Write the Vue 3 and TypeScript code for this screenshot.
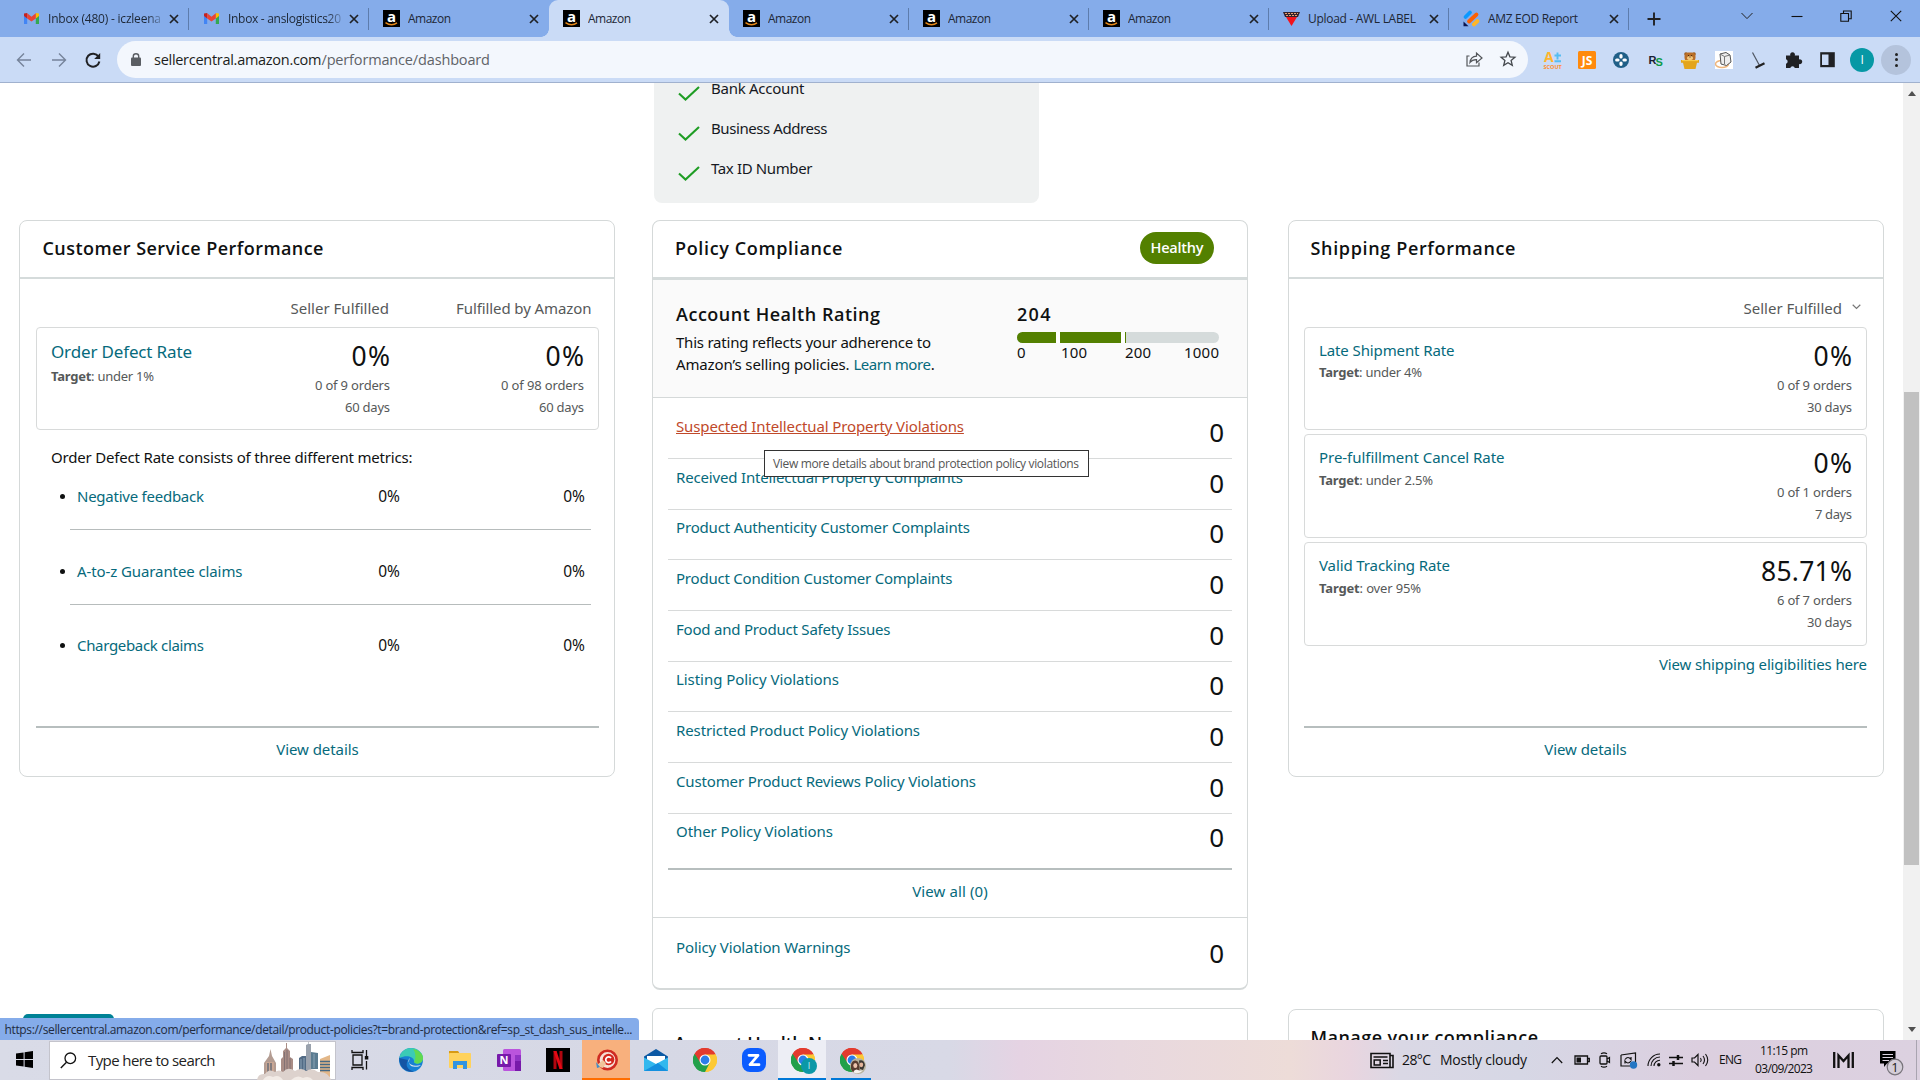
<script setup lang="ts">
interface Tab { title: string; icon: 'gmail' | 'amazon' | 'upload' | 'jotform'; w?: number; clip?: boolean; active?: boolean }
interface Rate { name: string; w: number; target: string; tw: number; value: string; vw: number; orders: string; days: string; dw: number }

// Tunes letter-spacing so that a label takes a given width in px.
const vFit = {
  mounted(el: HTMLElement, binding: { value?: number }) {
    if (!binding.value) return
    const range = document.createRange()
    range.selectNodeContents(el)
    const natural = range.getBoundingClientRect().width
    const count = (el.textContent ?? '').trim().length
    const spacing = (binding.value - natural) / (count - 1)
    el.style.letterSpacing = `${spacing.toFixed(3)}px`
    el.style.marginRight = `${(parseFloat(getComputedStyle(el).marginRight) - spacing).toFixed(3)}px`
  },
}

const tabs: Tab[] = [
  { title: 'Inbox (480) - iczleena', icon: 'gmail', w: 113, clip: true },
  { title: 'Inbox - anslogistics20', icon: 'gmail', w: 113, clip: true },
  { title: 'Amazon', icon: 'amazon', w: 43 },
  { title: 'Amazon', icon: 'amazon', w: 43, active: true },
  { title: 'Amazon', icon: 'amazon', w: 43 },
  { title: 'Amazon', icon: 'amazon', w: 43 },
  { title: 'Amazon', icon: 'amazon', w: 43 },
  { title: 'Upload - AWL LABEL', icon: 'upload', w: 108 },
  { title: 'AMZ EOD Report', icon: 'jotform', w: 90 },
]

const checks = [
  { label: 'Bank Account', w: 93.5 },
  { label: 'Business Address', w: 116.5 },
  { label: 'Tax ID Number', w: 101.5 },
]

const metrics = [
  { label: 'Negative feedback', w: 127 },
  { label: 'A-to-z Guarantee claims', w: 165.5 },
  { label: 'Chargeback claims', w: 127 },
]

const policies = [
  { label: 'Suspected Intellectual Property Violations', w: 288 },
  { label: 'Received Intellectual Property Complaints', w: 287 },
  { label: 'Product Authenticity Customer Complaints', w: 294 },
  { label: 'Product Condition Customer Complaints', w: 276.5 },
  { label: 'Food and Product Safety Issues', w: 214.5 },
  { label: 'Listing Policy Violations', w: 163 },
  { label: 'Restricted Product Policy Violations', w: 244 },
  { label: 'Customer Product Reviews Policy Violations', w: 300 },
  { label: 'Other Policy Violations', w: 157 },
]

const rates: Rate[] = [
  { name: 'Late Shipment Rate', w: 135.5, target: 'under 4%', tw: 103, value: '0%', vw: 38.5, orders: '0 of 9 orders', days: '30 days', dw: 45 },
  { name: 'Pre-fulfillment Cancel Rate', w: 185.5, target: 'under 2.5%', tw: 114, value: '0%', vw: 38.5, orders: '0 of 1 orders', days: '7 days', dw: 37 },
  { name: 'Valid Tracking Rate', w: 131, target: 'over 95%', tw: 102, value: '85.71%', vw: 91, orders: '6 of 7 orders', days: '30 days', dw: 45 },
]
</script>

<template>
  <div class="screen">
    <svg width="0" height="0" class="defs">
      <defs>
        <symbol id="chrome" viewBox="0 0 24 24">
          <path d="M12 12 1.6 6A12 12 0 0 1 22.4 6Z" fill="#e33b2e" />
          <path d="M12 12 22.4 6A12 12 0 0 1 12 24Z" fill="#fcc934" />
          <path d="M12 12 12 24A12 12 0 0 1 1.6 6Z" fill="#22a04a" />
          <path d="M12 6.5H22.6A12 12 0 0 0 1.6 6l5.6 8.6Z" fill="#e33b2e" />
          <path d="M12 6.5H22.6A12 12 0 0 1 12 24l4.8-9.2Z" fill="#fcc934" />
          <path d="M16.8 14.8 12 24A12 12 0 0 1 1.6 6l5.6 8.8Z" fill="#22a04a" />
          <circle cx="12" cy="12" r="5.5" fill="#fff" /><circle cx="12" cy="12" r="4.4" fill="#2b7de9" />
        </symbol>
      </defs>
    </svg>

    <header class="tabbar">
      <div v-for="(t, i) in tabs" :key="i" class="tab" :class="{ active: t.active, nosep: t.active || i === 2 }">
        <svg v-if="t.icon === 'gmail'" class="fav" viewBox="0 0 17 17">
          <path d="M1 4.5V14h3.2V8z" fill="#4285f4" /><path d="M16 4.5V14h-3.2V8z" fill="#34a853" />
          <path d="M1 3.5 4.2 3v5.6L1 6z" fill="#c5221f" /><path d="M16 3.5 12.8 3v5.6L16 6z" fill="#fbbc04" />
          <path d="M4.2 3.2 8.5 6.8l4.3-3.6v5.2L8.5 11.6 4.2 8.4z" fill="#ea4335" />
        </svg>
        <svg v-else-if="t.icon === 'amazon'" class="fav" viewBox="0 0 17 17">
          <rect width="17" height="17" fill="#000" />
          <text x="8.5" y="11.6" text-anchor="middle" class="fav-a">a</text>
          <path d="M2.5 12.6q6 4.2 11.5.3" fill="none" stroke="#e88a1a" stroke-width="1.4" />
        </svg>
        <svg v-else-if="t.icon === 'upload'" class="fav" viewBox="0 0 17 17">
          <path d="M0 2h17l-2 5H2z" fill="#33232e" /><path d="M2 3.5h13M3 5.5h11" stroke="#e8a070" stroke-width="1" stroke-dasharray="2 1" />
          <path d="M3 7h11l-5.500 9z" fill="#f3131c" />
        </svg>
        <svg v-else class="fav" viewBox="0 0 17 17">
          <path d="M2.5 7 7 2.5" stroke="#0a99ff" stroke-width="3.8" stroke-linecap="round" />
          <path d="M6 11.5 13.5 4.5" stroke="#ff6100" stroke-width="3.8" stroke-linecap="round" />
          <path d="M10.8 14.5 14.5 11" stroke="#ffb629" stroke-width="3.8" stroke-linecap="round" />
          <path d="M.5 11.5v4.800h5z" fill="#0a1551" />
        </svg>
        <span class="tab-title" :class="{ clip: t.clip }"><span v-fit="t.w">{{ t.title }}</span></span>
        <svg class="close" viewBox="0 0 10 10"><path d="M1 1l8 8M9 1 1 9" stroke="#1f2125" stroke-width="1.7" /></svg>
      </div>
      <svg class="plus" viewBox="0 0 14 14"><path d="M7 .5v13M.5 7h13" stroke="#202124" stroke-width="1.9" /></svg>
      <div class="window-buttons">
        <svg viewBox="0 0 12 12"><path d="M.5 3 6 8.6 11.500 3" fill="none" stroke="#222" stroke-width="1" /></svg>
        <svg viewBox="0 0 12 12"><path d="M.5 6.500h11" stroke="#111" stroke-width="1.1" /></svg>
        <svg viewBox="0 0 12 12"><path d="M.8 3.500h7.700v7.700H.8zM3.500 3.500V1h7.700v7.700H8.500" fill="none" stroke="#111" stroke-width="1.1" /></svg>
        <svg viewBox="0 0 12 12"><path d="M.8.8l10.400 10.400M11.200.8.8 11.200" stroke="#111" stroke-width="1.1" /></svg>
      </div>
    </header>

    <div class="toolbar">
      <div class="nav">
        <svg viewBox="0 0 16 16"><path d="M15 8H1.500M8 1.500 1.500 8 8 14.500" fill="none" stroke="#76839a" stroke-width="1.4" /></svg>
        <svg viewBox="0 0 16 16"><path d="M1 8h13.500M8 1.500 14.500 8 8 14.500" fill="none" stroke="#76839a" stroke-width="1.400" /></svg>
        <svg viewBox="0 0 16 16"><path d="M13.500 4.600A6.500 6.500 0 1 0 14.400 9.500" fill="none" stroke="#202124" stroke-width="2" /><path d="M15.200 1v6h-6z" fill="#202124" /></svg>
      </div>
      <div class="address">
        <svg class="lock" viewBox="0 0 10 13"><rect y="4.500" width="10" height="8.500" rx="1" fill="#5a5e63" /><path d="M2.300 5V3.200a2.700 2.400 0 0 1 5.400 0V5" fill="none" stroke="#5a5e63" stroke-width="1.400" /></svg>
        <span class="url"><b v-fit="167.5">sellercentral.amazon.com</b><span v-fit="168.5">/performance/dashboard</span></span>
        <svg class="share" viewBox="0 0 17 16"><path d="M3.500 5H1v10h12v-3.500M4 11.500c.4-4 2.500-6.200 6.500-6.400V2l5.500 5-5.500 4.600V8.600C7.500 8.500 5.500 9.500 4 11.500z" fill="none" stroke="#53565a" stroke-width="1.200" /></svg>
        <svg class="star" viewBox="0 0 16 16"><path d="m8 1.200 1.900 4.600 5 .4-3.800 3.200 1.200 4.900L8 11.700l-4.300 2.600 1.200-4.900L1.100 6.200l5-.4z" fill="none" stroke="#44484d" stroke-width="1.300" /></svg>
      </div>
      <div class="exts">
        <svg viewBox="0 0 18 18"><text x="0" y="10.500" class="ext-a">A</text><path d="M13.500 1.500v7M10.500 4.500h6.500M10.500 10.300h6.500" stroke="#56bdf2" stroke-width="1.900" /><text x="-.5" y="17.500" class="ext-scout">SCOUT</text></svg>
        <svg viewBox="0 0 18 18"><rect width="18" height="18" rx="1.500" fill="#ff8a0c" /><text x="9" y="13.500" text-anchor="middle" class="ext-js">JS</text></svg>
        <svg viewBox="0 0 18 18"><circle cx="9" cy="9" r="8" fill="#205f87" /><path d="M9 4.700v1.300M9 12v1.300M4.700 9H6M12 9h1.300" stroke="#fff" stroke-width="3.200" stroke-linecap="round" /></svg>
        <svg viewBox="0 0 18 18"><text x="1.500" y="12.500" class="ext-rs">R</text><text x="8.500" y="15" class="ext-rs green">S</text></svg>
        <svg viewBox="0 0 18 18"><circle cx="5" cy="3" r="1.800" fill="#9b5918" /><circle cx="13" cy="3" r="1.800" fill="#9b5918" /><rect x="3.500" y="1.500" width="11" height="9" rx="4" fill="#b96f28" /><ellipse cx="9" cy="7" rx="3" ry="2" fill="#f2c77c" /><path d="M0 9h18v2.800H16L14.500 18h-11L2 11.800H0z" fill="#e3a51d" /><path d="M1 9.600h16" stroke="#f9cf50" /><path d="M7 4.500h.8M10.300 4.500h.8M8.500 6h1" stroke="#2c1908" /></svg>
        <svg viewBox="0 0 18 18"><rect width="18" height="18" fill="#fff" /><ellipse cx="7" cy="13" rx="6.500" ry="3.500" fill="none" stroke="#efb67d" stroke-width="1.500" /><path d="M5 3 11 1.500l4 2.500 1 7-4.500 3.500L6 13z" fill="#eee" stroke="#555" stroke-width="1" /><path d="M9.500 5.500v7.500M5 3l4.500 2.500L15 4" fill="none" stroke="#777" /></svg>
        <svg viewBox="0 0 18 18"><path d="M2.500 1.500 9.500 14.500" stroke="#4e5561" stroke-width="1.200" /><path d="m5.500 16.800 9-4.500" stroke="#222" stroke-width="2.200" /></svg>
        <svg viewBox="0 0 18 18"><path d="M2 4.500h4.300a2.400 2.400 0 1 1 4.500 0H15v4a2.400 2.400 0 1 1 0 4.500v4h-4.200a2.300 2.300 0 0 0-4.500 0H2v-4.300a2.300 2.300 0 0 0 0-4.400z" fill="#202124" /></svg>
        <svg viewBox="0 0 18 18"><path d="M1.200 1.200h14.600v15H1.200z" fill="#202124" /><path d="M3 3.500h6.500v10.500H3z" fill="#cadbf6" /></svg>
      </div>
      <span class="avatar">I</span>
      <span class="menu"><i /><i /><i /></span>
    </div>

    <div class="viewport">
      <main class="page">
        <section class="col first">
          <article class="card">
            <h2 class="card-title"><span v-fit="281">Customer Service Performance</span></h2>
            <div class="card-body">
              <div class="headings"><span class="c1" v-fit="98.500">Seller Fulfilled</span><span class="c2" v-fit="135.500">Fulfilled by Amazon</span></div>
              <div class="box">
                <div class="box-left">
                  <a class="big-link" v-fit="141">Order Defect Rate</a>
                  <div class="target"><span v-fit="103"><b>Target</b>: under 1%</span></div>
                </div>
                <div class="box-value v1"><div class="num"><span v-fit="38.500">0%</span></div><div><span v-fit="75">0 of 9 orders</span></div><div><span v-fit="45">60 days</span></div></div>
                <div class="box-value v2"><div class="num"><span v-fit="38.500">0%</span></div><div><span v-fit="83">0 of 98 orders</span></div><div><span v-fit="45">60 days</span></div></div>
              </div>
              <p class="intro"><span v-fit="361.500">Order Defect Rate consists of three different metrics:</span></p>
              <ul class="metrics">
                <li v-for="m in metrics" :key="m.label">
                  <i class="bullet" /><span class="name"><a v-fit="m.w">{{ m.label }}</a></span>
                  <span class="m1">0%</span><span class="m2">0%</span>
                </li>
              </ul>
              <footer class="more"><a v-fit="82.500">View details</a></footer>
            </div>
          </article>
          <div class="teal-button" />
        </section>

        <section class="col middle">
          <div class="checklist">
            <div v-for="c in checks" :key="c.label" class="check">
              <svg viewBox="0 0 22 15"><path d="M1 7.500 7.500 13.500 21 1" fill="none" stroke="#1f9d24" stroke-width="2.100" /></svg>
              <span v-fit="c.w">{{ c.label }}</span>
            </div>
          </div>
          <article class="card policy">
            <h2 class="card-title"><span v-fit="167.500">Policy Compliance</span><em class="healthy"><span v-fit="53">Healthy</span></em></h2>
            <div class="rating">
              <div class="rating-text">
                <h3><span v-fit="204">Account Health Rating</span></h3>
                <p><span v-fit="255">This rating reflects your adherence to</span></p>
                <p><span v-fit="177.500">Amazon’s selling policies.&nbsp;</span><a v-fit="77.500">Learn more</a>.</p>
              </div>
              <div class="gauge">
                <h3><span v-fit="33.500">204</span></h3>
                <div class="bar"><i class="s1" /><i class="s2" /><i class="s3" /></div>
                <div class="scale"><span class="l0">0</span><span class="l1" v-fit="26">100</span><span class="l2" v-fit="26">200</span><span class="l3"><span v-fit="35">1000</span></span></div>
              </div>
            </div>
            <div class="policies">
              <div v-for="(p, i) in policies" :key="p.label" class="policy-row">
                <a :class="{ hover: i === 0 }"><span v-fit="p.w">{{ p.label }}</span></a><span class="zero">0</span>
              </div>
              <div class="tooltip"><span v-fit="306">View more details about brand protection policy violations</span></div>
            </div>
            <footer class="view-all"><a v-fit="75.500">View all (0)</a></footer>
            <div class="warnings"><a v-fit="174.500">Policy Violation Warnings</a><span class="zero">0</span></div>
          </article>
          <article class="card news"><h3><span v-fit="181">Account Health News</span></h3></article>
        </section>

        <section class="col last">
          <article class="card">
            <h2 class="card-title"><span v-fit="205">Shipping Performance</span></h2>
            <div class="card-body">
              <div class="headings select"><span v-fit="98.500">Seller Fulfilled</span><svg viewBox="0 0 9 6"><path d="M.7.8 4.500 4.500 8.300.8" fill="none" stroke="#777" stroke-width="1.200" /></svg></div>
              <div v-for="r in rates" :key="r.name" class="box ship">
                <div class="box-left">
                  <a v-fit="r.w">{{ r.name }}</a>
                  <div class="target"><span v-fit="r.tw"><b>Target</b>: {{ r.target }}</span></div>
                </div>
                <div class="box-value"><div class="num"><span v-fit="r.vw">{{ r.value }}</span></div><div><span v-fit="75">{{ r.orders }}</span></div><div><span v-fit="r.dw">{{ r.days }}</span></div></div>
              </div>
              <p class="eligible"><a v-fit="208">View shipping eligibilities here</a></p>
              <footer class="more"><a v-fit="82.500">View details</a></footer>
            </div>
          </article>
          <article class="card manage"><h3><span v-fit="227.500">Manage your compliance</span></h3></article>
        </section>
      </main>
      <aside class="scrollbar"><i class="up" /><div class="thumb" /><i class="down" /></aside>
      <div class="status"><span v-fit="628">https://sellercentral.amazon.com/performance/detail/product-policies?t=brand-protection&amp;ref=sp_st_dash_sus_intelle...</span></div>
    </div>

    <footer class="taskbar">
      <div class="start"><svg viewBox="0 0 17 17"><path d="M0 2.500 7.600 1.500V8H0zM8.600 1.300 17 0v8H8.600zM0 9h7.600v6.500L0 14.500zM8.600 9H17v8l-8.400-1.300z" fill="#000" /></svg></div>
      <div class="search">
        <svg class="glass" viewBox="0 0 17 17"><circle cx="10.300" cy="6.300" r="5.300" fill="none" stroke="#111" stroke-width="1.300" /><path d="M6.500 10.200.8 16" stroke="#111" stroke-width="1.400" /></svg>
        <span class="hint"><span v-fit="127.500">Type here to search</span></span>
        <svg class="city" viewBox="0 0 74 38">
          <path d="M7 32V21l5-7 1.500-7 1.500 7 4 7v11z" fill="#b39c92" /><path d="M9 20h8v12H9z" fill="#c9a795" /><path d="M11 21v9M14 21v9" stroke="#5c6573" stroke-width="1.300" />
          <path d="M24 34V17l2-2V9l3-3V1h1v5l3 3v6l3 2v17z" fill="#a98d86" /><path d="M27.500 10v22M30 8v24M33 16v16" stroke="#796b70" stroke-width=".8" />
          <path d="M42 34V16l3-2h6v20z" fill="#526b85" /><path d="M49 28V3l2-1V0h.6v2H54v26z" fill="#9aa2ad" /><path d="M54 27V10l7 1v16z" fill="#5b7c91" /><path d="M44 17v12M47 16v14M57 12v14" stroke="#89a2b5" />
          <path d="M63 34V17l10-4v22z" fill="#e3b788" /><path d="M63 19.500h10M63 22.500h10M63 25.500h10M63 28.500h10" stroke="#456a85" stroke-width="1.500" />
          <path d="M0 38q1-7 8-6 4-6 10-2 4-3 8 0 5-6 12-1 6-4 11 0 6-4 12 1 10-1 13 8z" fill="#ddd2cd" /><path d="M6 38q4-6 10-3 6-3 10 3M34 38q6-6 12-2 6-3 10 2" fill="#f2ebe6" />
        </svg>
      </div>
      <div class="apps">
        <div class="app"><svg viewBox="0 0 24 24"><path d="M5 7h9v10H5zM4 2v2.500h11V2M4 22v-2.500h11V22M18.500 2v6M18.500 13v8.500" fill="none" stroke="#111" stroke-width="1.300" /><rect x="16.800" y="8" width="3.500" height="3.500" fill="#111" /></svg></div>
        <div class="app"><svg viewBox="0 0 24 24"><circle cx="12" cy="12" r="12" fill="#1780d3" /><path d="M.5 10C1.500 3 7 0 12 0c7 0 12 5 12 10 0 6-7 7-9 4 1-5-7-8-14.500-4z" fill="#3bcbb5" /><path d="M14 1c6 1 10 5 10 9 0 6-7 7-9 4 2-3 2-9-1-13z" fill="#61d94f" /><path d="M.3 10C0 20 8 25 15 23.500 8 22 6 17 9 12c-3-1-6-1-8.700-2z" fill="#1455a4" /><path d="M11 10c-4 3 0 10 11 7-2 2-5 2-8 1.500-4-.5-5-5-3-8.500z" fill="#d8e0eb" /></svg></div>
        <div class="app"><svg viewBox="0 0 24 24"><path d="M1 3h9l2 3H1z" fill="#d89a13" /><rect x="1" y="5" width="22" height="15" rx=".8" fill="#ffd25c" /><path d="M5 21v-8h14v8h-4v-4H9v4z" fill="#3294e0" /></svg></div>
        <div class="app"><svg viewBox="0 0 24 24"><rect x="6" y="1" width="18" height="22" rx="1.500" fill="#ba54dd" /><path d="M18 7h6v6h-6z" fill="#9033c4" /><path d="M18 13h6v10h-6z" fill="#7719aa" /><rect y="6" width="14" height="13" rx="1" fill="#7719aa" /><text x="7" y="16" text-anchor="middle" class="one-n">N</text></svg></div>
        <div class="app"><svg viewBox="0 0 24 24"><rect width="24" height="24" fill="#000" /><path d="M7.500 3h3v18h-3zM13.500 3h3v18h-3z" fill="#b1060f" /><path d="M7.500 3h3l6 18h-3z" fill="#e50914" /></svg></div>
        <div class="app orange"><svg viewBox="0 0 24 24"><circle cx="12.500" cy="12" r="9.200" fill="#f6dfd4" stroke="#cf2b22" stroke-width="2.600" /><circle cx="13.500" cy="11.500" r="5.800" fill="#d3271e" /><path d="M16 10a2.900 2.900 0 1 0 0 3.400" fill="none" stroke="#fff" stroke-width="1.700" /><path d="m2 17 6-5 3 3-3 5-4-1z" fill="#f0c49a" /><path d="m1 14 4 5-3 1z" fill="#438dc5" /></svg></div>
        <div class="app"><svg viewBox="0 0 24 24"><path d="M0 8.500 12 1l12 7.500V23H0z" fill="#0c59a4" /><path d="M3 8h18v9H3z" fill="#fff" /><path d="M0 9.500 12 16l12-6.500V23H0z" fill="#32b8ee" /><path d="m0 23 14-8 10 8z" fill="#1490df" /></svg></div>
        <div class="app"><svg viewBox="0 0 24 24"><use href="#chrome" /></svg></div>
        <div class="app"><svg viewBox="0 0 24 24"><rect width="24" height="24" rx="8" fill="#0b5cff" /><path d="M7 7.300h9L8 16.700h9" fill="none" stroke="#fff" stroke-width="2.800" stroke-linejoin="round" stroke-linecap="round" /></svg></div>
        <div class="app running"><svg viewBox="0 0 26 26"><use href="#chrome" width="24" height="24" /><circle cx="18" cy="18" r="8" fill="#0b98a7" /><text x="18" y="21.300" text-anchor="middle" class="mini">I</text></svg></div>
        <div class="app grouped"><svg viewBox="0 0 26 26"><use href="#chrome" width="24" height="24" /><circle cx="18" cy="18" r="8" fill="#b9b49f" /><path d="M11 21q-1-8 4-8.500t4.500 11q-6 4-8.500-2.500z" fill="#5a3d30" /><path d="M19 12.500q5-1.500 6 4.500l-2 5-3-1z" fill="#3b3733" /><ellipse cx="15.300" cy="17.500" rx="2" ry="2.600" fill="#edc3ac" /><ellipse cx="21.300" cy="16.800" rx="1.900" ry="2.400" fill="#e4b59b" /><path d="M13 24.500q2-4 5-2.500t5 0q-4 5-10 2.500z" fill="#f5f2ee" /></svg></div>
      </div>
      <div class="tray">
        <svg class="t-news" viewBox="0 0 24 17"><path d="M1 1.500h19v14H1zM20 3.500h3v12h-4" fill="none" stroke="#111" stroke-width="1.600" /><path d="M3.500 5h14M13 8.500h5M13 11.500h5" stroke="#111" stroke-width="1.500" /><path d="M4.200 8h6v5h-6z" fill="none" stroke="#111" stroke-width="1.500" /></svg>
        <span class="temp"><span v-fit="29">28°C</span></span><span class="weather"><span v-fit="87">Mostly cloudy</span></span>
        <svg class="t-caret" viewBox="0 0 12 8"><path d="M.8 7 6 1.500 11.200 7" fill="none" stroke="#111" stroke-width="1.200" /></svg>
        <svg class="t-bat" viewBox="0 0 16 10"><path d="M1 1h12.500v8H1zM13.500 3.500h1.800v3h-1.800" fill="none" stroke="#111" stroke-width="1.300" /><path d="M2.500 2.500H7v5H2.500z" fill="#111" /></svg>
        <svg class="t-cam" viewBox="0 0 12 16"><rect x="1" y="4" width="7" height="8" rx="1" fill="none" stroke="#111" stroke-width="1.300" /><path d="m8 7 2.500-1.500v5L8 9M2 1.800q3-2 6 0M2 14.200q3 2 6 0" fill="none" stroke="#111" stroke-width="1.200" /></svg>
        <svg class="t-sync" viewBox="0 0 18 17"><path d="M1 3 15.500 1v11M1 3v11h9" fill="none" stroke="#111" stroke-width="1.200" /><path d="M5 7.500q3-4 6 0V5M11 9q-3 4-6 0v2.500" fill="none" stroke="#111" stroke-width="1.200" /><circle cx="13.500" cy="13" r="3.700" fill="#2476c3" /></svg>
        <svg class="t-wifi" viewBox="0 0 14 14"><path d="M1 13A12 12 0 0 1 13 1M4 13A9 9 0 0 1 13 4M7 13A6 6 0 0 1 13 7.200" fill="none" stroke="#111" stroke-width="1.100" /><circle cx="11.800" cy="11.800" r="1.700" fill="#111" /></svg>
        <svg class="t-mix" viewBox="0 0 14 13"><path d="M0 3.500h14M0 9.500h14" stroke="#111" stroke-width="1.600" /><path d="M9 1v5M4.500 7v5" stroke="#111" stroke-width="2.500" /></svg>
        <svg class="t-snd" viewBox="0 0 18 14"><path d="M1 5h2.500L7 1.500v11L3.500 9H1z" fill="none" stroke="#111" stroke-width="1.200" /><path d="M9.500 5q1.500 2 0 4M12 3q3 4 0 8M14.500 1q4.500 6 0 12" fill="none" stroke="#111" stroke-width="1.100" /></svg>
        <span class="eng"><span v-fit="23">ENG</span></span>
        <div class="clock"><span v-fit="48">11:15 pm</span><span v-fit="58">03/09/2023</span></div>
        <svg class="t-m" viewBox="0 0 21 16"><path d="M1.200 0v16M19.800 0v16M5.500 16V3.500L10.500 9l5-5.500V16" fill="none" stroke="#111" stroke-width="2.300" /></svg>
        <svg class="t-note" viewBox="0 0 26 28"><path d="M1 2h15.500v12.500H8L5 18v-3.500H1z" fill="#000" /><path d="M3.500 5.500H14M3.500 8.500H14M3.500 11.500H10" stroke="#dcd3e0" /><circle cx="16" cy="18" r="7.800" fill="#d4ced8" stroke="#77737a" stroke-width="1.200" /><text x="16" y="22.500" text-anchor="middle" class="badge-n">1</text></svg>
        <i class="peek" />
      </div>
    </footer>
  </div>
</template>

<style>
body { margin: 0; overflow: hidden; background: #fff; }
</style>

<style scoped>
* { box-sizing: border-box; }
.screen { width: 1920px; height: 1080px; display: flex; flex-direction: column; overflow: hidden; font-family: "Open Sans", "Noto Sans", sans-serif; color: #111; white-space: nowrap; }
.defs { position: absolute; }
svg { display: block; flex: none; overflow: visible; }
h2, h3, p, ul { margin: 0; padding: 0; }
a { color: #066a7c; }

.tabbar { height: 37px; background: #85acea; display: flex; align-items: flex-start; padding-left: 9px; flex: none; }
.tab { width: 180px; height: 37px; display: flex; align-items: center; padding: 0 10.500px 0 13.500px; border-radius: 9px 9px 0 0; font-size: 12px; color: #1d2735; position: relative; flex: none; }
.tab::after { content: ""; position: absolute; right: 0; top: 8px; width: 1px; height: 22px; background: #5d7cac; }
.tab.nosep::after { display: none; }
.tab.active { background: #cadbf6; }
.tab.active::before, .tab.active::after { content: ""; display: block; position: absolute; top: auto; bottom: 0; width: 8px; height: 8px; }
.tab.active::before { left: -8px; background: radial-gradient(circle at 0 0, transparent 7.500px, #cadbf6 8px); }
.tab.active::after { right: -8px; background: radial-gradient(circle at 100% 0, transparent 7.500px, #cadbf6 8px); }
.fav { width: 17px; height: 17px; }
.fav-a { font: bold 15px/1 "Open Sans", sans-serif; fill: #fff; }
.tab-title { flex: 1; margin-left: 8.500px; overflow: hidden; }
.tab-title.clip { mask-image: linear-gradient(90deg, #000 82%, transparent 98%); }
.close { width: 10px; height: 10px; }
.plus { width: 14px; height: 14px; margin: 12px 0 0 17.500px; }
.window-buttons { margin: 10px 18.500px 0 auto; display: flex; gap: 37.500px; }
.window-buttons svg { width: 12px; height: 12px; }

.toolbar { height: 46px; background: #cadbf6; border-bottom: 1px solid #a0b1ce; display: flex; align-items: center; flex: none; }
.nav { width: 117px; padding-left: 16px; display: flex; gap: 18.500px; }
.nav svg { width: 16px; height: 16px; }
.address { width: 1411px; height: 37px; margin-top: -1px; border-radius: 19px; background: #f3f7fd; display: flex; align-items: center; padding: 0 12px 0 14px; }
.lock { width: 10px; height: 13px; margin-top: 1px; }
.url { margin-left: 13px; font-size: 14.500px; line-height: 20px; padding-top: 2px; color: #5f6368; flex: 1; }
.url b { font-weight: 400; color: #1b1d20; }
.share { width: 17px; height: 16px; margin-right: 17px; }
.star { width: 16px; height: 16px; }
.exts { display: flex; gap: 16.400px; margin-left: 15.500px; }
.exts svg { width: 18px; height: 18px; }
.ext-a { font: bold 14px/1 "Open Sans", sans-serif; fill: #ffb52f; }
.ext-scout { font: bold 5.500px/1 "Open Sans", sans-serif; fill: #ff8e2d; }
.ext-js { font: bold 12px/1 "Open Sans", sans-serif; fill: #fff; }
.ext-rs { font: bold 11px/1 "Liberation Sans", sans-serif; fill: #172033; }
.ext-rs.green { fill: #0a9a48; }
.avatar { width: 24px; height: 24px; border-radius: 50%; background: #0798a5; color: #fff; font-size: 12px; line-height: 24px; text-align: center; margin-left: 13.500px; }
.menu { width: 30px; height: 30px; border-radius: 50%; background: #b4c3dc; margin-left: 7px; display: flex; flex-direction: column; align-items: center; justify-content: center; gap: 2.500px; }
.menu i { width: 3px; height: 3px; border-radius: 50%; background: #222; }

.viewport { height: 957px; flex: none; display: flex; position: relative; background: #fff; }
.page { width: 1903px; height: 957px; overflow: hidden; display: flex; padding-left: 19px; font-family: "Noto Sans", sans-serif; font-size: 15px; line-height: 20px; }
.col { width: 596px; flex: none; display: flex; flex-direction: column; }
.middle { margin-left: 37px; }
.last { margin-left: 40px; padding-top: 137px; }
.first { padding-top: 137px; }
.card { border: 1px solid #d5d9d9; border-radius: 8px; height: 557px; flex: none; background: #fff; }
.card-title { height: 58px; border-bottom: 2px solid #d5dbdb; display: flex; align-items: center; padding: 0 33px 2px 22.500px; font: 600 18px/24px "Open Sans", sans-serif; color: #0f1111; }
.last .card-title { padding-left: 21.500px; }
.card-body { padding: 19px 15px 0 16px; height: 497px; display: flex; flex-direction: column; }
.last .card-body { padding: 19px 16px 0 15px; }
.headings { height: 29px; display: flex; justify-content: flex-end; color: #565959; padding-right: 7.500px; flex: none; }
.c1 { margin-right: 67px; }
.box { height: 103px; border: 1px solid #d8dada; border-radius: 4px; display: flex; padding: 11px 14px 0 14px; flex: none; }
.box-left { flex: 1; display: flex; flex-direction: column; align-items: flex-start; }
.big-link { font-size: 17px; line-height: 24px; margin-top: 1px; }
.target { font-size: 13px; margin-top: 2px; color: #565959; }
.target b { font-weight: 700; }
.box-value { font-size: 13px; line-height: 22px; color: #565959; text-align: right; margin-top: 1.500px; }
.box-value .num { font-size: 26.500px; line-height: 30px; color: #0f1111; margin-bottom: 3.500px; }
.v2 { width: 194px; }
.intro { margin-top: 17px; color: #0f1111; padding-left: 15px; }
.metrics { list-style: none; margin: 0 8px 0 34px; }
.metrics li { height: 75px; padding-top: 31px; border-bottom: 1px solid #b7bcbc; display: flex; align-items: flex-start; }
.metrics li:first-child { height: 63px; padding-top: 19px; }
.metrics li:last-child { border: 0; padding-top: 30px; }
.bullet { width: 5px; height: 5px; border-radius: 50%; background: #0f1111; margin: 8px 10px 0 -10px; flex: none; }
.name { margin-left: 2px; width: 242px; }
.m1, .m2 { text-align: right; font-size: 15.500px; }
.m1 { width: 81px; }
.m2 { width: 185px; }
.more { margin-top: auto; height: 50px; border-top: 2px solid #b7bebe; padding-top: 11px; text-align: center; flex: none; }
.teal-button { margin: 237px 0 0 4px; width: 91px; height: 30px; border-radius: 5px; background: #008296; }

.checklist { margin-left: 2px; width: 385px; height: 120px; background: #eff1f1; border-radius: 0 0 8px 8px; padding-left: 24px; margin-bottom: 17px; flex: none; }
.check { height: 40px; display: flex; margin-top: -5px; margin-bottom: 5px; color: #16191f; }
.check svg { width: 22px; height: 15px; margin: 8px 11px 0 0; }
.policy { height: 770px; border-bottom-width: 2px; }
.policy .card-title { height: 59px; border-bottom-width: 3px; justify-content: space-between; padding-left: 22px; padding-bottom: 2.500px; }
.healthy { background: #538000; color: #fff; width: 74px; height: 32px; border-radius: 16px; font: 600 14.500px/31px "Open Sans", sans-serif; text-align: center; }
.rating { height: 118px; background: #fafafa; border-bottom: 1px solid #d5d9d9; display: flex; padding: 22px 28px 0 23px; justify-content: space-between; color: #0f1111; }
h3 { font: 600 18px/24px "Open Sans", sans-serif; color: #0f1111; }
.rating p { line-height: 22px; }
.rating p:nth-child(2) { margin-top: 5px; }
.gauge { width: 202px; }
.bar { margin-top: 6px; height: 11px; border-radius: 6px; overflow: hidden; background: #d5dbdb; display: flex; }
.bar i { background: #538000; border-right: 4px solid #fff; }
.s1 { width: 43px; }
.s2 { width: 65px; }
.bar .s3 { width: 1px; border: 0; }
.scale { line-height: 18px; display: flex; }
.l1 { margin-left: 35.500px; }
.l2 { margin-left: 38px; }
.l3 { margin-left: auto; }
.policies { padding: 0 15px; position: relative; }
.policy-row { height: 50.700px; border-top: 1px solid #d8dada; padding: 7.600px 8px 0 8px; display: flex; justify-content: space-between; }
.policy-row:first-child { height: 60px; border: 0; padding-top: 18px; }
.policy-row:nth-child(9) { height: 55px; }
.zero { font-size: 26px; line-height: 30px; color: #0f1111; margin-top: 1px; }
.hover { color: #c0492a; text-decoration: underline; }
.tooltip { position: absolute; left: 111px; top: 52px; width: 325px; height: 27px; border: 1px solid #333; background: #fff; color: #555; font: 12px/25px "Open Sans", sans-serif; padding-left: 8px; }
.view-all { margin: 0 15px; border-top: 2px solid #b7bebe; padding-top: 11px; height: 49px; text-align: center; }
.warnings { border-top: 1px solid #d5d9d9; padding: 19px 23px 0 23px; display: flex; justify-content: space-between; }
.news { margin-top: 18px; border-radius: 6px; padding: 22px 21px; height: 90px; }
.manage { margin-top: 232px; padding: 15px 21.500px; height: 90px; }
.select span { margin-right: 10px; }
.headings.select { padding-right: 6px; }
.select svg { width: 9px; height: 6px; margin-top: 6px; }
.ship { height: 104px; margin-bottom: 4px; }
.ship:nth-child(2) { height: 103px; }
.ship .target { margin-top: 3px; }
.ship:nth-child(2) .target { margin-top: 2px; }
.ship .box-left { padding-top: 1px; }
.eligible { text-align: right; margin-top: 4px; }

.scrollbar { width: 17px; background: #f1f1f1; display: flex; flex-direction: column; align-items: center; padding: 8px 0; }
.up { border: 4.500px solid transparent; border-top: 0; border-bottom: 5px solid #505050; }
.down { border: 4.500px solid transparent; border-bottom: 0; border-top: 5px solid #505050; margin-top: auto; }
.thumb { width: 15px; height: 473px; background: #c1c1c1; margin-top: 296px; }
.status { position: absolute; left: 0; bottom: 0; width: 639px; height: 22px; background: #85acea; border-radius: 0 4px 0 0; font-size: 12px; line-height: 23px; padding-left: 4.500px; color: #1f2b40; }

.taskbar { height: 40px; flex: none; display: flex; background: linear-gradient(90deg, #d9dbe7 0, #d6d8e5 650px, #d8d9e6 950px, #e5d3e3 1020px, #e8d8df 1120px, #eddcd8 1290px, #e9d5df 1350px, #dad8e5 1400px, #d6d7e5 1520px, #dccfdf 1700px, #dcd1e0 100%); }
.start { width: 49px; padding: 11px 0 0 15.500px; }
.start svg { width: 17px; height: 17px; }
.search { width: 287px; height: 39px; margin-top: 1px; background: #fff; border: 1px solid #c4c4cc; display: flex; align-items: center; padding-left: 10px; font-size: 15px; color: #222; }
.glass { width: 17px; height: 17px; margin-right: 11px; }
.hint { width: 169px; padding-bottom: 1.500px; }
.city { width: 74px; height: 38px; }
.apps { display: flex; }
.app { width: 49px; height: 40px; padding: 8px 0 0 12.500px; flex: none; }
.apps .app:first-child { width: 50px; padding-left: 11.500px; }
.app svg { width: 24px; height: 24px; }
.orange { width: 48px; margin-right: 1px; background: #f8b07d; border-bottom: 2px solid #ff6d00; }
.running { width: 48px; margin-right: 1px; background: #edeef5; border-bottom: 2px solid #0078d7; }
.running svg, .grouped svg { width: 26px; height: 26px; }
.grouped { position: relative; padding-left: 13px; }
.grouped::after { content: ""; position: absolute; left: 4px; bottom: 0; width: 40px; height: 2px; background: #0078d7; }
.one-n { font: bold 11px/1 "Open Sans", sans-serif; fill: #fff; }
.mini { font: 9px/1 "Open Sans", sans-serif; fill: #cfeef0; }
.tray { margin-left: auto; width: 550px; display: flex; align-items: center; font-size: 14px; color: #111; }
.t-news { width: 24px; height: 17px; margin-right: 8px; }
.temp { width: 38px; }
.weather { width: 111px; }
.temp, .weather, .eng { padding-bottom: 1px; flex: none; }
.t-caret { width: 12px; height: 8px; margin-right: 11px; }
.t-bat { width: 16px; height: 10px; margin-right: 9px; }
.t-cam { width: 12px; height: 16px; margin-right: 9px; }
.t-sync { width: 18px; height: 17px; margin-right: 9px; }
.t-wifi { width: 14px; height: 14px; margin-right: 8px; }
.t-mix { width: 14px; height: 13px; margin-right: 8px; }
.t-snd { width: 18px; height: 14px; margin-right: 10px; }
.eng { font-size: 12px; width: 36px; }
.clock { width: 58px; font-size: 12px; line-height: 18px; display: flex; flex-direction: column; align-items: center; margin-right: 20px; flex: none; }
.t-m { width: 21px; height: 16px; margin-right: 25px; }
.t-note { width: 26px; height: 28px; margin-top: 6px; }
.badge-n { font: 13px/1 "Open Sans", sans-serif; fill: #222; }
.peek { width: 1px; height: 40px; background: #a9a4b0; margin-left: 11px; flex: none; }
</style>
